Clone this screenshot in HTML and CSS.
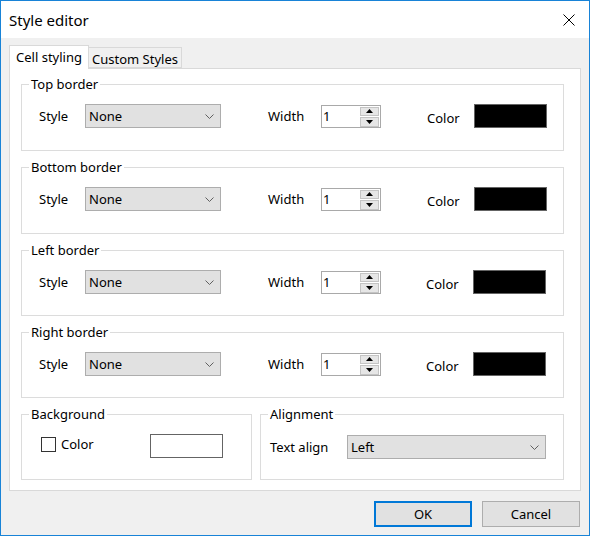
FILE: index.html
```html
<!DOCTYPE html>
<html>
<head>
<meta charset="utf-8">
<link rel="stylesheet" href="styles.css">
</head>
<body>
<div class="window">
  <div class="titlebar">
    <span class="title">Style editor</span>
    <svg class="close" width="12" height="12" viewBox="0 0 12 12"><path d="M0.5 0.5L11.5 11.5M11.5 0.5L0.5 11.5" stroke="#000" stroke-width="1" fill="none"/></svg>
  </div>
  <div class="client">
    <div class="tabs">
      <div class="tab active">Cell styling</div>
      <div class="tab">Custom Styles</div>
    </div>
    <div class="panel">
      <div class="group g-tall"><span class="legend">Top border</span>
        <div class="row">
          <span class="lbl lbl-style">Style</span>
          <div class="combo"><span>None</span><svg width="9" height="5" viewBox="0 0 9 5"><path d="M0.5 0.5L4.5 4.5L8.5 0.5" stroke="#606060" fill="none"/></svg></div>
          <span class="lbl lbl-width">Width</span>
          <div class="spin"><span class="spin-val">1</span><div class="spin-btns"><div class="spin-btn"><svg width="7" height="4" viewBox="0 0 7 4"><path d="M0 4L3.5 0L7 4Z" fill="#000"/></svg></div><div class="spin-btn"><svg width="7" height="4" viewBox="0 0 7 4"><path d="M0 0L7 0L3.5 4Z" fill="#000"/></svg></div></div></div>
          <span class="lbl lbl-color">Color</span>
          <div class="swatch black"></div>
        </div>
      </div>
      <div class="group g-tall"><span class="legend">Bottom border</span>
        <div class="row">
          <span class="lbl lbl-style">Style</span>
          <div class="combo"><span>None</span><svg width="9" height="5" viewBox="0 0 9 5"><path d="M0.5 0.5L4.5 4.5L8.5 0.5" stroke="#606060" fill="none"/></svg></div>
          <span class="lbl lbl-width">Width</span>
          <div class="spin"><span class="spin-val">1</span><div class="spin-btns"><div class="spin-btn"><svg width="7" height="4" viewBox="0 0 7 4"><path d="M0 4L3.5 0L7 4Z" fill="#000"/></svg></div><div class="spin-btn"><svg width="7" height="4" viewBox="0 0 7 4"><path d="M0 0L7 0L3.5 4Z" fill="#000"/></svg></div></div></div>
          <span class="lbl lbl-color">Color</span>
          <div class="swatch black"></div>
        </div>
      </div>
      <div class="group"><span class="legend">Left border</span>
        <div class="row">
          <span class="lbl lbl-style">Style</span>
          <div class="combo"><span>None</span><svg width="9" height="5" viewBox="0 0 9 5"><path d="M0.5 0.5L4.5 4.5L8.5 0.5" stroke="#606060" fill="none"/></svg></div>
          <span class="lbl lbl-width">Width</span>
          <div class="spin"><span class="spin-val">1</span><div class="spin-btns"><div class="spin-btn"><svg width="7" height="4" viewBox="0 0 7 4"><path d="M0 4L3.5 0L7 4Z" fill="#000"/></svg></div><div class="spin-btn"><svg width="7" height="4" viewBox="0 0 7 4"><path d="M0 0L7 0L3.5 4Z" fill="#000"/></svg></div></div></div>
          <span class="lbl lbl-color lbl-color-l">Color</span>
          <div class="swatch black"></div>
        </div>
      </div>
      <div class="group"><span class="legend">Right border</span>
        <div class="row">
          <span class="lbl lbl-style">Style</span>
          <div class="combo"><span>None</span><svg width="9" height="5" viewBox="0 0 9 5"><path d="M0.5 0.5L4.5 4.5L8.5 0.5" stroke="#606060" fill="none"/></svg></div>
          <span class="lbl lbl-width">Width</span>
          <div class="spin"><span class="spin-val">1</span><div class="spin-btns"><div class="spin-btn"><svg width="7" height="4" viewBox="0 0 7 4"><path d="M0 4L3.5 0L7 4Z" fill="#000"/></svg></div><div class="spin-btn"><svg width="7" height="4" viewBox="0 0 7 4"><path d="M0 0L7 0L3.5 4Z" fill="#000"/></svg></div></div></div>
          <span class="lbl lbl-color lbl-color-l">Color</span>
          <div class="swatch black"></div>
        </div>
      </div>
      <div class="bottom-row">
        <div class="group bg-group"><span class="legend">Background</span>
          <div class="row row-top">
            <div class="check-wrap"><span class="checkbox"></span><span class="check-lbl">Color</span></div>
            <div class="swatch white"></div>
          </div>
        </div>
        <div class="group align-group"><span class="legend">Alignment</span>
          <div class="row">
            <span class="lbl lbl-align">Text align</span>
            <div class="combo combo-wide"><span>Left</span><svg width="9" height="5" viewBox="0 0 9 5"><path d="M0.5 0.5L4.5 4.5L8.5 0.5" stroke="#606060" fill="none"/></svg></div>
          </div>
        </div>
      </div>
    </div>
    <div class="buttons">
      <button class="btn default">OK</button>
      <button class="btn">Cancel</button>
    </div>
  </div>
</div>
</body>
</html>
```
FILE: styles.css
```css
html, body {
  margin: 0;
  padding: 0;
  background: #f0f0f0;
}
body {
  font-family: "Noto Sans", "Open Sans", sans-serif;
  font-size: 13px;
  color: #000;
}
.window {
  width: 590px;
  height: 536px;
  box-sizing: border-box;
  border: 1px solid #1883d7;
  display: flex;
  flex-direction: column;
  background: #f0f0f0;
}
.titlebar {
  height: 37px;
  flex: none;
  background: #fff;
  display: flex;
  align-items: center;
  justify-content: space-between;
  padding: 0 14px 0 8px;
}
.title {
  font-size: 15px;
  line-height: 20px;
  padding-top: 1px;
}
.close {
  display: block;
}
.client {
  flex: 1;
  display: flex;
  flex-direction: column;
  padding: 7px 8px 0 8px;
}
.tabs {
  display: flex;
  align-items: flex-end;
  height: 23px;
  flex: none;
}
.tab {
  box-sizing: border-box;
  border: 1px solid #d9d9d9;
  border-bottom: none;
  text-align: center;
  line-height: 18px;
}
.tab.active {
  width: 80px;
  height: 24px;
  margin-bottom: -1px;
  background: #fff;
  position: relative;
  z-index: 1;
  padding-top: 2px;
}
.tab:not(.active) {
  width: 94px;
  height: 21px;
  margin-left: -1px;
  background: #f0f0f0;
  padding-top: 2px;
  border-bottom: 1px solid #d9d9d9;
}
.panel {
  height: 423px;
  flex: none;
  box-sizing: border-box;
  border: 1px solid #d9d9d9;
  background: #fff;
  padding: 15px 16px 0 11px;
  display: flex;
  flex-direction: column;
  gap: 16px;
}
.group {
  position: relative;
  box-sizing: border-box;
  border: 1px solid #dcdcdc;
  height: 66px;
  padding: 19px 0 0 17px;
}
.group.g-tall {
  height: 67px;
}
.legend {
  position: absolute;
  top: -10px;
  left: 7px;
  padding: 0 2px;
  background: #fff;
  line-height: 18px;
}
.row {
  display: flex;
  align-items: center;
  height: 24px;
}
.row-top {
  align-items: flex-start;
}
.lbl {
  line-height: 18px;
  white-space: nowrap;
}
.lbl-style {
  width: 46px;
}
.lbl-width {
  width: 53px;
  margin-left: 47px;
}
.lbl-color {
  width: 47px;
  margin-left: 46px;
  padding-top: 3px;
}
.lbl-color-l {
  width: 47px;
  margin-left: 45px;
}
.combo {
  width: 136px;
  height: 24px;
  box-sizing: border-box;
  border: 1px solid #adadad;
  background: #e1e1e1;
  display: flex;
  align-items: center;
  justify-content: space-between;
  padding: 0 6px 0 3px;
  line-height: 18px;
}
.combo svg {
  display: block;
}
.combo-wide {
  width: 199px;
}
.spin {
  width: 60px;
  height: 23px;
  box-sizing: border-box;
  border: 1px solid #a9a9a9;
  background: #fff;
  display: flex;
  justify-content: space-between;
  align-items: stretch;
}
.spin-val {
  padding-left: 1px;
  line-height: 21px;
}
.spin-btns {
  width: 20px;
  display: flex;
  flex-direction: column;
  gap: 1px;
  padding: 1px 1px 0 0;
  box-sizing: border-box;
}
.spin-btn {
  flex: 1;
  box-sizing: border-box;
  border: 1px solid #c4c4c4;
  background: #e6e6e6;
  display: flex;
  align-items: center;
  justify-content: center;
}
.spin-btn svg {
  display: block;
}
.swatch {
  width: 73px;
  height: 24px;
  box-sizing: border-box;
  border: 1px solid #646464;
}
.swatch.black {
  background: #000;
}
.swatch.white {
  background: #fff;
}
.bottom-row {
  display: flex;
  gap: 8px;
}
.bg-group {
  width: 231px;
  padding: 19px 0 0 19px;
}
.align-group {
  width: 304px;
  padding: 20px 0 0 9px;
}
.check-wrap {
  width: 109px;
  display: flex;
  align-items: center;
  margin-top: 1px;
}
.checkbox {
  width: 15px;
  height: 15px;
  box-sizing: border-box;
  border: 1px solid #333;
  background: #fff;
}
.check-lbl {
  margin-left: 5px;
  line-height: 18px;
}
.lbl-align {
  width: 77px;
}
.buttons {
  display: flex;
  justify-content: flex-end;
  gap: 10px;
  margin-top: 10px;
  padding-right: 1px;
}
.btn {
  width: 98px;
  height: 26px;
  box-sizing: border-box;
  border: 1px solid #adadad;
  background: #e1e1e1;
  font-family: "Noto Sans", "Open Sans", sans-serif;
  font-size: 13px;
  color: #000;
  padding: 0;
  margin: 0;
  line-height: 18px;
}
.btn.default {
  border: 2px solid #0078d7;
}
```
